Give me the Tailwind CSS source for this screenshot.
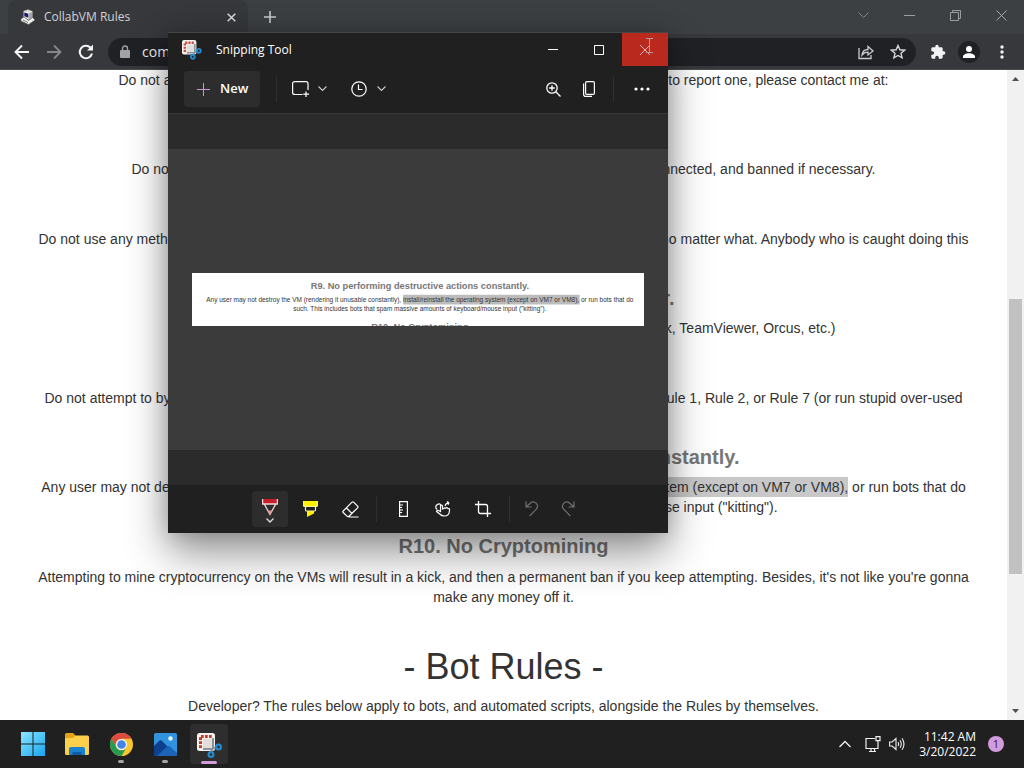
<!DOCTYPE html>
<html lang="en">
<head>
<meta charset="utf-8">
<title>CollabVM Rules</title>
<script src="https://cdn.jsdelivr.net/npm/@tailwindcss/browser@4"></script>
</head>
<body class="relative flex h-screen flex-col overflow-hidden bg-[#202020] font-['Open_Sans','Noto_Sans',sans-serif] text-xs text-white">

<!-- Browser -->
<header class="shrink-0 bg-[#3c4043]">
  <div class="flex h-[34px] items-center pl-2">
    <div class="flex h-full w-60 items-center rounded-t-lg bg-[#37383c] pr-3 pl-3">
      <svg class="mr-2 size-4" viewBox="0 0 16 16" aria-hidden="true"><path d="M3.500 2 8 .5l4.500 1.700v6L8.500 11l-5-2.500z" fill="#e4e4e0" stroke="#777" stroke-width=".6"/><path d="m4.300 3.500 4 1.300v4l-4-1.500z" fill="#19197c"/><path d="M8.800 4.600 12 3.200v5L8.800 10z" fill="#a5a5a8"/><path d="m1 10 3-2 4.500 3.500L12.500 8.500 15 11l-6.500 4.500L1 12z" fill="#f2f2ee" stroke="#666" stroke-width=".7"/><path d="m3 11 5 2.500" stroke="#555" stroke-width=".8"/></svg>
      <span class="flex-1 text-[#d0d2d5]">CollabVM Rules</span>
      <button aria-label="Close tab"><svg class="size-[9px]" viewBox="0 0 9 9" stroke="#dadce0" stroke-width="1.500"><path d="m.7.700 7.600 7.600M8.300.700.7 8.300"/></svg></button>
    </div>
    <button class="ml-4" aria-label="New tab"><svg class="size-3" viewBox="0 0 12 12" stroke="#c8cacd" stroke-width="1.600"><path d="M6 0v12M0 6h12"/></svg></button>
    <div class="ml-auto flex items-center gap-[35px] pr-[17px] pb-1">
      <button aria-label="Search tabs"><svg class="size-[11px]" viewBox="0 0 11 11" fill="none" stroke="#84888a"><path d="m.5 2.500 5 5 5-5"/></svg></button>
      <button aria-label="Minimize"><svg class="size-[11px]" viewBox="0 0 11 11" stroke="#9a9d9f"><path d="M0 5.500h11"/></svg></button>
      <button aria-label="Restore"><svg class="size-[11px]" viewBox="0 0 11 11" fill="none" stroke="#9a9d9f"><path d="M.5 2.500h8v8h-8zM2.500 2.500v-2h8v8h-2"/></svg></button>
      <button aria-label="Close"><svg class="size-[11px]" viewBox="0 0 11 11" stroke="#a9abad"><path d="m.5.500 10 10m0-10-10 10"/></svg></button>
    </div>
  </div>
  <div class="flex h-9 items-center border-b border-[#4b4c4f] bg-[#37383c] pl-[14px]">
    <button class="mr-4" aria-label="Back"><svg class="size-4" viewBox="0 0 16 16" fill="none" stroke="#f5f5f5" stroke-width="1.900"><path d="M15 8H2M8 1.500 1.500 8 8 14.500"/></svg></button>
    <button class="mr-4" aria-label="Forward"><svg class="size-4" viewBox="0 0 16 16" fill="none" stroke="#85878a" stroke-width="1.800"><path d="M1 8h13M8 1.500 14.500 8 8 14.500"/></svg></button>
    <button class="mr-[14px]" aria-label="Reload"><svg class="size-4" viewBox="0 0 16 16" fill="none" stroke="#f5f5f5" stroke-width="2"><path d="M14 9.500A6.200 6.200 0 1 1 12.500 3.800"/><path d="M15 .5v6H9z" fill="#f5f5f5" stroke="none"/></svg></button>
    <div class="flex h-7 flex-1 items-center rounded-full bg-[#202124] px-3">
      <svg class="mr-3 h-[13px] w-[10px]" viewBox="0 0 10 13" aria-hidden="true"><path d="M2.500 6V3.500a2.500 2.500 0 0 1 5 0V6" fill="none" stroke="#a0a3a7" stroke-width="1.400"/><rect y="5" width="10" height="8" rx="1" fill="#a0a3a7"/></svg>
      <input class="min-w-0 flex-1 bg-transparent text-sm text-[#eeeeee] outline-none" aria-label="Address" value="computernewb.com/collab-vm/rules/">
      <button class="mr-4" aria-label="Share"><svg class="size-4" viewBox="0 0 16 16" fill="none" stroke="#c9cbce" stroke-width="1.300"><path d="M1 4v10.500h12V11"/><path d="M4 11c.5-4 3-5.500 6-5.500V2.500L15 7l-5 4V8.200C7.500 8.200 5.500 9 4 11z"/></svg></button>
      <button class="-mr-[2px]" aria-label="Bookmark"><svg class="size-4" viewBox="0 0 16 16" fill="none" stroke="#d5d7da" stroke-width="1.400"><path d="m8 1.500 1.900 4.300 4.700.4-3.600 3.100 1.100 4.600L8 11.500l-4.100 2.400L5 9.300 1.400 6.200l4.700-.4z"/></svg></button>
    </div>
    <div class="flex items-center pr-5 pl-[14px]">
      <button class="mr-3" aria-label="Extensions"><svg class="size-4" viewBox="0 0 24 24" fill="#f1f3f4"><path d="M20.500 11H19V7c0-1.100-.9-2-2-2h-4V3.500a2.500 2.500 0 0 0-5 0V5H4c-1.100 0-2 .9-2 2v3.800h1.500a2.700 2.700 0 0 1 0 5.400H2V20c0 1.100.9 2 2 2h3.800v-1.500a2.700 2.700 0 0 1 5.400 0V22H17c1.100 0 2-.9 2-2v-4h1.500a2.500 2.500 0 0 0 0-5z"/></svg></button>
      <button class="mr-5 flex size-[22px] items-center justify-center rounded-full bg-[#202124]" aria-label="Profile"><svg class="size-3" viewBox="0 0 12 12" fill="#fff"><circle cx="6" cy="3" r="3"/><path d="M0 12v-1.500C0 8.500 3 7.200 6 7.200s6 1.300 6 3.300V12z"/></svg></button>
      <button aria-label="Menu"><svg class="h-[14px] w-1" viewBox="0 0 4 14" fill="#f1f3f4"><circle cx="2" cy="2" r="1.700"/><circle cx="2" cy="7" r="1.700"/><circle cx="2" cy="12" r="1.700"/></svg></button>
    </div>
  </div>
</header>

<div class="flex min-h-0 flex-1 bg-white">
  <main class="flex flex-1 flex-col items-center overflow-hidden text-center font-['Liberation_Sans',Arial,sans-serif] text-sm leading-5 text-[#333333]">
    <p class="flex h-10 w-[770px] max-w-full justify-between"><span>Do not access</span><span>If you want to report one, please contact me at:</span></p>
    <p class="mt-[49px] flex w-[744px] max-w-full justify-between"><span>Do not flood</span><span>will be disconnected, and banned if necessary.</span></p>
    <p class="mt-[50px] flex h-10 w-[930px] max-w-full justify-between"><span>Do not use any method</span><span>of this, no matter what. Anybody who is caught doing this</span></p>
    <h4 class="mt-[19px] mb-[10px] w-[342px] text-right text-xl leading-5 font-bold text-[#777777]">server.</h4>
    <p class="w-[664px] text-right">(AnyDesk, TeamViewer, Orcus, etc.)</p>
    <p class="mt-[50px] flex h-10 w-[918px] max-w-full justify-between"><span>Do not attempt to bypass</span><span>to break Rule 1, Rule 2, or Rule 7 (or run stupid over-used</span></p>
    <h4 class="mt-[19px] mb-[10px] text-xl leading-5 font-bold text-[#777777]">R9. No performing destructive actions constantly.</h4>
    <p class="px-9">Any user may not destroy the VM (rendering it unusable constantly), <mark class="bg-[#c8c8c8] py-[2px] text-[#333333]">install/reinstall the operating system (except on VM7 or VM8),</mark> or run bots that do such. This includes bots that spam massive amounts of keyboard/mouse input ("kitting").</p>
    <h4 class="mt-[19px] mb-[11px] text-xl leading-5 font-bold text-[#777777]">R10. No Cryptomining</h4>
    <p class="px-9">Attempting to mine cryptocurrency on the VMs will result in a kick, and then a permanent ban if you keep attempting. Besides, it's not like you're gonna make any money off it.</p>
    <h1 class="mt-10 mb-[9px] text-4xl leading-10">- Bot Rules -</h1>
    <p>Developer? The rules below apply to bots, and automated scripts, alongside the Rules by themselves.</p>
  </main>
  <div class="flex w-[17px] shrink-0 flex-col items-center bg-[#f1f1f1]" aria-hidden="true">
    <svg class="mt-[7px] h-1 w-[7px]" viewBox="0 0 7 4" fill="#505050"><path d="M0 4 3.500 0 7 4z"/></svg>
    <div class="grow-[218]"></div>
    <div class="w-[13px] grow-[275] bg-[#c1c1c1]"></div>
    <div class="grow-[135]"></div>
    <svg class="mb-[7px] h-1 w-[7px]" viewBox="0 0 7 4" fill="#505050"><path d="M0 0 3.500 4 7 0z"/></svg>
  </div>
</div>

<!-- Taskbar -->
<footer class="relative z-20 flex h-12 shrink-0 items-center bg-[#202020] pl-[11px]">
  <button class="flex size-11 items-center justify-center" aria-label="Start">
    <svg class="size-6" viewBox="0 0 24 24"><defs><linearGradient id="win" x2="1" y2="1"><stop stop-color="#8be6ff"/><stop offset="1" stop-color="#16a5ef"/></linearGradient></defs><path d="M0 0h11.500v11.500H0zM12.500 0H24v11.500H12.500zM0 12.500h11.500V24H0zM12.500 12.500H24V24H12.500z" fill="url(#win)"/></svg>
  </button>
  <button class="flex size-11 items-center justify-center" aria-label="File Explorer">
    <svg class="h-[22px] w-6" viewBox="0 0 24 22"><path d="M0 1.500Q0 0 1.500 0H8l2.500 2.500V6H0z" fill="#e6a316"/><path d="M0 5h8l2.500-2.500h12Q24 2.500 24 4v16.500q0 1.500-1.500 1.500h-21Q0 22 0 20.500z" fill="#fcd04b"/><path d="M4 22v-6q0-2 2-2h12q2 0 2 2v6z" fill="#1982cf"/><path d="M7.500 22v-3h9v3z" fill="#0d5ca5"/></svg>
  </button>
  <button class="flex size-11 flex-col items-center justify-center gap-1 pt-2" aria-label="Google Chrome">
    <svg class="size-[23px]" viewBox="0 0 24 24"><circle cx="12" cy="12" r="12" fill="#fbc52c"/><path d="M1.600 6A12 12 0 0 1 22.400 6H12a6 6 0 0 0-5.200 9z" fill="#dd4a42"/><path d="M1.600 6A12 12 0 0 0 12 24l5.200-9a6 6 0 0 1-10.400 0z" fill="#249a52"/><circle cx="12" cy="12" r="5.800" fill="#f5f5f5"/><circle cx="12" cy="12" r="4.500" fill="#4483ea"/></svg>
    <span class="h-[3px] w-[6px] rounded-full bg-[#a5a5a5]"></span>
  </button>
  <button class="flex size-11 flex-col items-center justify-center gap-1 pt-2" aria-label="Photos">
    <svg class="size-[23px]" viewBox="0 0 23 23"><rect width="23" height="23" rx="1.500" fill="#3193df"/><path d="M0 13 5.500 7.500q1-1 2 0L22 22q-.5 1-1.500 1h-19Q0 23 0 21.500z" fill="#0d3f8c"/><path d="m3 23 10-9.500q1.500-1.200 3 0L23 20v1.500q0 1.500-1.500 1.500z" fill="#1b64b8"/><circle cx="16.500" cy="5.500" r="2.200" fill="#e8f6ff"/></svg>
    <span class="h-[3px] w-[6px] rounded-full bg-[#a5a5a5]"></span>
  </button>
  <button class="ml-[3px] flex h-10 w-[38px] flex-col items-center justify-end gap-[3px] rounded bg-[#2e2e2e]" aria-label="Snipping Tool">
    <svg class="size-[25px]" viewBox="0 0 25 25"><rect width="18" height="18" rx="2.500" fill="#f5f1ee"/><path d="M3.500 15V3.500H15" fill="none" stroke="#c43b2a" stroke-width="3" stroke-dasharray="2.700 1.300"/><path d="M6 6h9v9H6z" fill="#e3ddda"/><path d="M16 5v10l-2.500 5M6 16h9l5-2.500" fill="none" stroke="#8b9299" stroke-width="2"/><circle cx="21.500" cy="14" r="2.400" fill="none" stroke="#2588cc" stroke-width="2.200"/><circle cx="14" cy="21.500" r="2.400" fill="none" stroke="#2588cc" stroke-width="2.200"/></svg>
    <span class="h-[3px] w-4 rounded-full bg-[#d49bd8]"></span>
  </button>
  <div class="ml-auto flex items-center pr-5">
    <button class="mr-[14px]" aria-label="Show hidden icons"><svg class="h-2 w-3" viewBox="0 0 12 8" fill="none" stroke="#f0f0f0" stroke-width="1.300"><path d="m.5 7 5.500-5.500L11.500 7"/></svg></button>
    <button class="mr-2" aria-label="Network"><svg class="h-[17px] w-4" viewBox="0 0 16 17" fill="none" stroke="#f0f0f0" stroke-width="1.200"><path d="M10 2.500H1v10h12V8M4 15.500h7M6 12.500v3M9.500 12.500v3M11 .6h4v4h-4zM13 4.500V8"/></svg></button>
    <button class="mr-[14px]" aria-label="Volume"><svg class="h-[14px] w-4" viewBox="0 0 16 14" fill="none" stroke="#f0f0f0" stroke-width="1.100"><path d="M.6 5v4h2.500L7 12.500v-11L3.100 5zM9 5q1.300 2 0 4M11 3.200q2.600 3.800 0 7.600M13 1.200q4 5.800 0 11.600"/></svg></button>
    <time class="mr-3 text-right text-xs leading-[15px]">11:42 AM<br>3/20/2022</time>
    <button class="flex size-4 items-center justify-center rounded-full bg-[#d49bdc] text-[11px] leading-4 text-[#30203a]" aria-label="1 notification">1</button>
  </div>
</footer>

<!-- Snipping Tool window -->
<section class="absolute top-8 left-[168px] z-10 flex h-[501px] w-[500px] flex-col bg-[#202020] [box-shadow:0_20px_40px_rgb(0_0_0/0.42),0_0_20px_rgb(0_0_0/0.18)]" aria-label="Snipping Tool">
  <div class="flex h-[34px] items-center border-t border-[#454848] pl-[14px]">
    <svg class="mr-[14px] size-5" viewBox="0 0 25 25" aria-hidden="true"><rect width="18" height="18" rx="2.500" fill="#f5f1ee"/><path d="M3.500 15V3.500H15" fill="none" stroke="#c8483a" stroke-width="3" stroke-dasharray="2.700 1.300"/><path d="M6 6h9v9H6z" fill="#e0dfe0"/><path d="M16 5v10l-2.500 5M6 16h9l5-2.500" fill="none" stroke="#8b9299" stroke-width="2"/><circle cx="21" cy="13.500" r="2.400" fill="none" stroke="#2588cc" stroke-width="2.400"/><circle cx="13.500" cy="21" r="2.400" fill="none" stroke="#2588cc" stroke-width="2.400"/></svg>
    <span class="flex-1 text-xs">Snipping Tool</span>
    <button class="flex h-full w-[46px] items-center justify-center" aria-label="Minimize"><svg class="size-[10px]" viewBox="0 0 10 10" stroke="#fff"><path d="M0 4.500h10"/></svg></button>
    <button class="flex h-full w-[46px] items-center justify-center" aria-label="Maximize"><svg class="size-[10px]" viewBox="0 0 10 10" fill="none" stroke="#fff"><path d="M.5.500h9v9h-9z"/></svg></button>
    <button class="relative flex h-full w-[46px] items-center justify-center bg-[#b9291e]" aria-label="Close">
      <svg class="size-[10px]" viewBox="0 0 10 10" stroke="#e0b5b0"><path d="m0 0 10 10M10 0 0 10"/></svg>
      <svg class="absolute top-[5px] left-6 h-[15px] w-[7px]" viewBox="0 0 7 15" fill="none" stroke="#b59a95"><path d="M0 .5h7M3.500.5v14M0 14.500h7"/></svg>
    </button>
  </div>
  <div class="flex h-12 items-center border-b border-[#3a3a3a] pr-[18px] pb-px pl-4">
    <button class="flex h-9 w-[76px] items-center gap-[10px] rounded bg-[#2d2d2d] pl-[13px] text-[13px] font-semibold"><svg class="size-[13px]" viewBox="0 0 13 13" stroke="#c995d0"><path d="M6.500 0v13M0 6.500h13"/></svg>New</button>
    <span class="mr-[15px] ml-4 h-[26px] w-px bg-[#303030]"></span>
    <button class="flex items-center gap-2" aria-label="Snipping mode">
      <svg class="h-4 w-[18px]" viewBox="0 0 18 16" fill="none" stroke="#fff" stroke-width="1.200"><path d="M10.500 13.500H3Q.6 13.500.6 11.500v-9Q.6.600 3 .6h11q2 0 2 1.900v6.500M14 10.500V16M11.200 13.200H17"/></svg>
      <svg class="h-[6px] w-[9px]" viewBox="0 0 9 6" fill="none" stroke="#c5c5c5" stroke-width="1.200"><path d="m.5.500 4 4 4-4"/></svg>
    </button>
    <button class="ml-6 flex items-center gap-[10px]" aria-label="Delay">
      <svg class="size-4" viewBox="0 0 16 16" fill="none" stroke="#fff" stroke-width="1.200"><circle cx="8" cy="8" r="7.200"/><path d="M7.500 3.500V8.500H11.500"/></svg>
      <svg class="h-[6px] w-[9px]" viewBox="0 0 9 6" fill="none" stroke="#c5c5c5" stroke-width="1.200"><path d="m.5.500 4 4 4-4"/></svg>
    </button>
    <button class="ml-auto" aria-label="Zoom"><svg class="size-[15px]" viewBox="0 0 15 15" fill="none" stroke="#fff" stroke-width="1.300"><circle cx="6" cy="6" r="5.200"/><path d="m9.800 9.800 4.700 4.700M6 3.200v5.600M3.200 6h5.600"/></svg></button>
    <button class="ml-[22px]" aria-label="Copy"><svg class="h-4 w-3" viewBox="0 0 12 16" fill="none" stroke="#fff" stroke-width="1.200"><rect x="2.600" y=".6" width="8.800" height="12.800" rx="1.200"/><path d="M.6 2.500v10.700q0 2.200 2.200 2.200H9"/></svg></button>
    <span class="mr-5 ml-[18px] h-[26px] w-px bg-[#303030]"></span>
    <button aria-label="See more"><svg class="h-1 w-4" viewBox="0 0 16 4" fill="#fff"><circle cx="2" cy="2" r="1.600"/><circle cx="8" cy="2" r="1.600"/><circle cx="14" cy="2" r="1.600"/></svg></button>
  </div>
  <div class="flex min-h-0 flex-1 flex-col bg-[#2b2b2b] py-[35px]">
    <div class="flex flex-1 items-center bg-[#3b3b3b] px-6">
      <svg class="w-full bg-white font-['Liberation_Sans',Arial,sans-serif]" viewBox="0 0 976 113" text-anchor="middle" role="img" aria-label="Captured snip">
        <rect x="456" y="47" width="381" height="21" fill="#bcbcbc"/>
        <text x="492" y="35" font-size="20" font-weight="700" fill="#777">R9. No performing destructive actions constantly.</text>
        <g font-size="14" fill="#333">
          <text x="492" y="63">Any user may not destroy the VM (rendering it unusable constantly), install/reinstall the operating system (except on VM7 or VM8), or run bots that do</text>
          <text x="492" y="83">such. This includes bots that spam massive amounts of keyboard/mouse input ("kitting").</text>
        </g>
        <text x="492" y="123" font-size="20" font-weight="700" fill="#777">R10. No Cryptomining</text>
      </svg>
    </div>
  </div>
  <div class="flex h-12 items-center justify-center gap-1">
    <button class="flex size-9 flex-col items-center justify-center gap-[2px] rounded bg-[#2d2d2d] pt-1" aria-label="Ballpoint pen">
      <svg class="h-[17px] w-4" viewBox="0 0 16 17" fill="none"><path d="M1 0h14v5H1z" fill="#c61f2b"/><path d="M.6 0v5h14.800V0M2.200 5 8 15.500 13.800 5" stroke="#f2d9d6" stroke-width="1.300"/><path d="m6 11.500 2 4.500 2-4.500z" fill="#e98b8b"/></svg>
      <svg class="h-[5px] w-2" viewBox="0 0 8 5" fill="none" stroke="#ddd" stroke-width="1.300"><path d="m.5.500 3.500 3.500L7.500.500"/></svg>
    </button>
    <button class="flex size-9 items-center justify-center" aria-label="Highlighter"><svg class="h-4 w-[15px]" viewBox="0 0 15 16"><path d="M.5 0h14v5H.5zM4 10h7v2.500L4 16z" fill="#fff100"/><path d="M.6 0v4.500q0 1 1 1h11.800q1 0 1-1V0M2.500 5.500V9q0 1 1 1h8q1 0 1-1V5.500" fill="none" stroke="#f6efa0" stroke-width="1.200"/></svg></button>
    <button class="flex size-9 items-center justify-center" aria-label="Eraser"><svg class="h-[17px] w-[17px]" viewBox="0 0 17 17" fill="none" stroke="#fff" stroke-width="1.200"><path d="M1.200 10 10 1.200q.8-.8 1.600 0l4 4q.8.800 0 1.600L7 15.200q-1 1-2 0L1.200 11.500q-.8-.8 0-1.500zM4.500 7l5.300 5.300M7 16h9.500"/></svg></button>
    <span class="mx-1 h-[26px] w-px bg-[#303030]"></span>
    <button class="flex size-9 items-center justify-center" aria-label="Ruler"><svg class="h-4 w-[9px]" viewBox="0 0 9 16" fill="none" stroke="#fff" stroke-width="1.200"><path d="M.6.600h7.800v14.800H.6zM.6 4H4M.6 6.500h2.500M.6 9H4M.6 11.500h2.500"/></svg></button>
    <button class="flex size-9 items-center justify-center" aria-label="Touch writing"><svg class="size-4" viewBox="0 0 16 16" fill="none" stroke="#fff" stroke-width="1.200"><path d="M2 8.500Q-.5 6 2 3.800t4 .4M10 5q1-3.500 4-3.200M14 1.800l-2-1.300M14 1.800l-1 2"/><path d="M5.500 10.500V4.800q1-1.500 2 0V8l1-.2q1-1.600 2.200-.6 1.500-1.200 2.300.4 1.800-.6 1.500 1.800-.2 5.400-5 5.600Q6.500 15 4.800 13L1.500 10.500q.8-1.500 2.500-.8z"/></svg></button>
    <button class="flex size-9 items-center justify-center" aria-label="Crop"><svg class="size-4" viewBox="0 0 16 16" fill="none" stroke="#fff" stroke-width="1.300"><path d="M3.500 0v10.500q0 2 2 2H16M0 3.500h10.500q2 0 2 2V16"/></svg></button>
    <span class="mr-[2px] ml-1 h-[26px] w-px bg-[#303030]"></span>
    <button class="flex size-8 items-center justify-center" aria-label="Undo"><svg class="size-4" viewBox="0 0 14 16" fill="none" stroke="#707070" stroke-width="1.200"><path d="M1 .5V6h5.500M1.300 5.800 5.500 2q3-2.200 5.800.3 2.700 3-.2 6L4.500 15.200"/></svg></button>
    <button class="flex size-8 items-center justify-center" aria-label="Redo"><svg class="size-4" viewBox="0 0 14 16" fill="none" stroke="#707070" stroke-width="1.200"><path d="M13 .5V6H7.500M12.700 5.800 8.500 2Q5.500-.2 2.700 2.300q-2.700 3 .2 6l6.600 6.900"/></svg></button>
  </div>
</section>
</body>
</html>
